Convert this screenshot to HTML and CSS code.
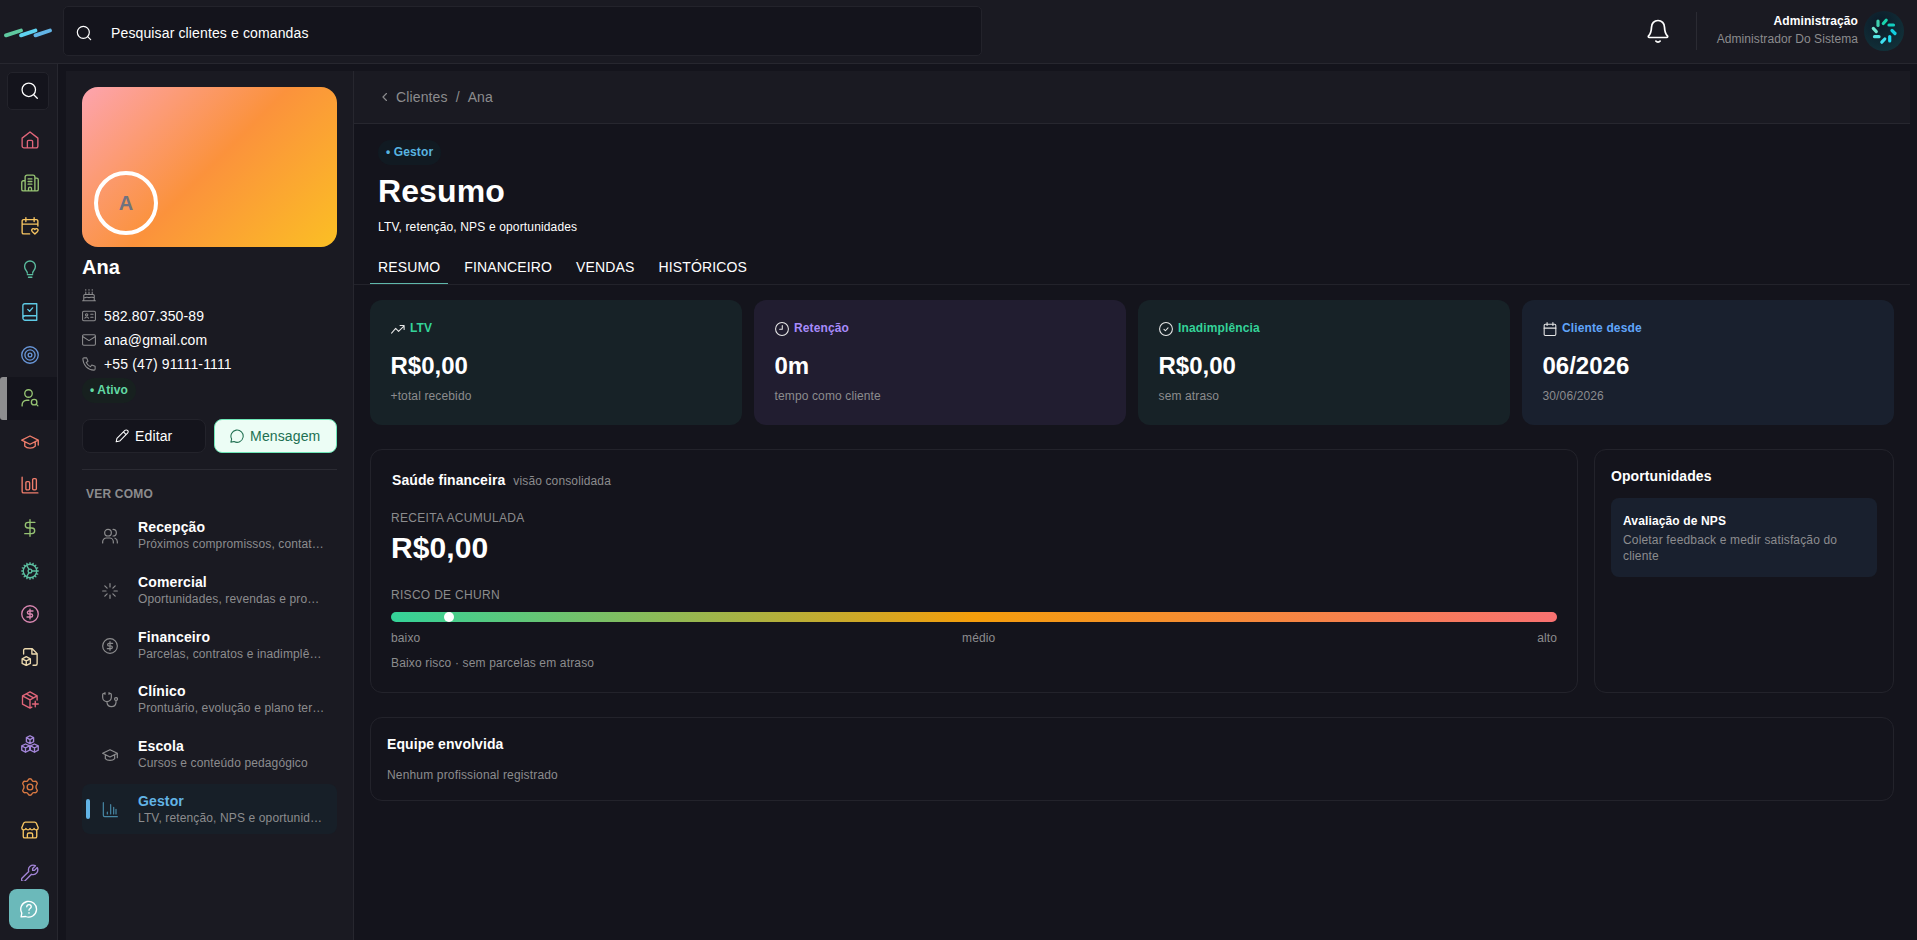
FILE: index.html
```html
<!DOCTYPE html>
<html lang="pt-BR">
<head>
    <meta charset="UTF-8">
    <meta name="viewport" content="width=device-width, initial-scale=1.0">
    <title>Clientes - Ana</title>
    <link rel="stylesheet" href="styles.css">
</head>
<body>

<!-- Topo -->
<header class="topbar">
    <svg class="logo" viewBox="0 0 48 10">
        <path d="M2 7.400L17 2.500" stroke="#5fc9a0"/>
        <path d="M17 7.400L31.500 2.500" stroke="#5fd3f0"/>
        <path d="M31.500 7.400L46 2.500" stroke="#62b4e6"/>
    </svg>
    <div class="search">
        <svg class="icon" viewBox="0 0 24 24"><circle cx="11" cy="11" r="9"/><path d="M22 22l-4.500-4.500"/></svg>
        <span>Pesquisar clientes e comandas</span>
    </div>
    <div class="user-area">
        <svg class="icon bell" viewBox="0 0 24 24"><path d="M3.300 16.500c1.700-1.800 2.500-3.300 2.700-8C6 5 8.600 2.300 12 2.300S18 5 18 8.500c.2 4.700 1 6.200 2.700 8 .5.6.2 1.500-.7 1.500H4c-.9 0-1.200-.9-.7-1.500zM10 21.300c1 1.300 3 1.300 4 0"/></svg>
        <div class="user-name">
            <strong>Administração</strong>
            <span>Administrador Do Sistema</span>
        </div>
        <svg class="user-avatar" viewBox="0 0 40 40">
            <defs>
                <radialGradient id="avatar-bg" cx="0.4" cy="0.3" r="0.8">
                    <stop offset="0" stop-color="#0c1a28"/>
                    <stop offset="1" stop-color="#12333b"/>
                </radialGradient>
            </defs>
            <circle cx="20" cy="20" r="20" fill="url(#avatar-bg)"/>
            <g stroke-width="3.200" stroke-linecap="round">
                <path d="M14 10v4.500" stroke="#3ecfae"/>
                <path d="M19.300 12.500l2.900-3.300" stroke="#19d3ae"/>
                <path d="M25 14h4.500" stroke="#12cdbf"/>
                <path d="M28 19.500l3 3" stroke="#12cfe0"/>
                <path d="M25.700 25.500v4.500" stroke="#1fdcf2"/>
                <path d="M20.800 28l-3 3.200" stroke="#3fe0f0"/>
                <path d="M15 25.700h-4.500" stroke="#52e3e3"/>
                <path d="M12.300 20.600L9.300 17.400" stroke="#6fe6cf"/>
            </g>
        </svg>
    </div>
</header>

<div class="layout">

    <!-- Menu lateral -->
    <nav class="sidebar">
        <div class="side-search">
            <svg class="icon" viewBox="0 0 24 24"><circle cx="11" cy="11" r="9.500"/><path d="M23 23l-5-5"/></svg>
        </div>
        <div class="side-menu">
            <a class="side-item red"><svg class="icon" viewBox="0 0 24 24"><path d="M1.500 9.500L12 1.300l10.500 8.200V20a2.500 2.500 0 0 1-2.500 2.500H4A2.500 2.500 0 0 1 1.500 20zM8.500 22.500V14a1.500 1.500 0 0 1 1.500-1.500h4a1.500 1.500 0 0 1 1.500 1.500v8.500"/></svg></a>
            <a class="side-item green"><svg class="icon" viewBox="0 0 24 24"><path d="M5.500 22.500V4A2.500 2.500 0 0 1 8 1.500h8A2.500 2.500 0 0 1 18.500 4v18.500zM5.500 9H3a2 2 0 0 0-2 2v9.500a2 2 0 0 0 2 2h2.500M18.500 5.500H21a2 2 0 0 1 2 2v13a2 2 0 0 1-2 2h-2.500M9.500 6.500h5M9.500 10h5M9.500 13.500h5M10 22.500v-3a2 2 0 0 1 4 0v3"/></svg></a>
            <a class="side-item yellow"><svg class="icon" viewBox="0 0 24 24"><path d="M22.500 12V5.500a2 2 0 0 0-2-2h-17a2 2 0 0 0-2 2v15a2 2 0 0 0 2 2h8M6.500 1v5M17.500 1v5M1.500 9.500h21M18.500 22.800l-3.600-3.600c-1.300-1.400-.3-3.700 1.500-3.700 1 0 1.600.6 2.100 1.200.5-.6 1.100-1.200 2.100-1.200 1.900 0 2.800 2.300 1.500 3.700z"/></svg></a>
            <a class="side-item teal"><svg class="icon" viewBox="0 0 24 24"><path d="M8.500 17.500c0-3-3.700-4.200-3.700-9A7.200 7.200 0 0 1 12 1.300a7.200 7.200 0 0 1 7.200 7.200c0 4.800-3.700 6-3.700 9M8.500 19.500h7M10 23h4.500"/></svg></a>
            <a class="side-item cyan"><svg class="icon" viewBox="0 0 24 24"><path d="M2.500 20V3.500a2.500 2.500 0 0 1 2.500-2.500h16v22H5.500a3 3 0 0 1 0-6H21M9 8.500l2.500 2.500 4-4.500"/></svg></a>
            <a class="side-item blue"><svg class="icon" viewBox="0 0 24 24"><circle cx="12" cy="12" r="11"/><circle cx="12" cy="12" r="6.800"/><circle cx="12" cy="12" r="2.500"/></svg></a>
            <a class="side-item green active"><svg class="icon" viewBox="0 0 24 24"><circle cx="10" cy="6" r="5"/><path d="M1.500 22.500v-1.500a6 6 0 0 1 6-6h3M22.500 22.500l-2-2"/><circle cx="17.500" cy="17.500" r="3.700"/></svg></a>
            <a class="side-item coral"><svg class="icon" viewBox="0 0 24 24"><path d="M1 9.500L12 4l11 5.500-11 5.500zM23 9.500v6.500M5 12v5.500c3 3.500 11 3.500 14 0V12"/></svg></a>
            <a class="side-item coral"><svg class="icon" viewBox="0 0 24 24"><path d="M1.500 1.500v19a2 2 0 0 0 2 2h19"/><rect x="6.500" y="7.500" width="5" height="11" rx="1.500"/><rect x="15.500" y="3.500" width="5" height="15" rx="1.500"/></svg></a>
            <a class="side-item green"><svg class="icon" viewBox="0 0 24 24"><path d="M12 1v22M18.500 4.500H9.500a3.700 3.700 0 0 0 0 7.500h5a3.700 3.700 0 0 1 0 7.500H5"/></svg></a>
            <a class="side-item teal"><svg class="icon" viewBox="0 0 24 24"><circle cx="12" cy="12" r="9"/><circle cx="12" cy="12" r="2.500"/><path d="M12 1v2M12 21v2M1 12h2M14.500 12H21M23 12h-2M4.200 4.200l1.500 1.500M18.300 18.300l1.500 1.500M4.200 19.800l1.500-1.500M18.300 5.700l1.500-1.500M10.700 9.800L7.500 4.500M10.700 14.200L7.500 19.500M7.800 1.800l.7 1.700M15.500 20.500l.7 1.700M16.200 1.800l-.7 1.700M8.500 20.500l-.7 1.700M1.800 7.800l1.700.7M20.500 15.500l1.700.7M1.800 16.200l1.700-.7M20.500 8.500l1.700-.7"/></svg></a>
            <a class="side-item pink"><svg class="icon" viewBox="0 0 24 24"><circle cx="12" cy="12" r="11"/><path d="M16 8h-5.500a2 2 0 0 0 0 4h3a2 2 0 0 1 0 4H8M12 5.500v13"/></svg></a>
            <a class="side-item sand"><svg class="icon" viewBox="0 0 24 24"><path d="M3.500 8V3A2 2 0 0 1 5.500 1H15l6.500 6.500V21a2 2 0 0 1-2 2H16M14.500 1v7h7M7 11.500l5.500 3v6L7 23.300l-5.500-2.800v-6zM1.500 14.500L7 17.300l5.500-2.800M7 17.300v6"/></svg></a>
            <a class="side-item red"><svg class="icon" viewBox="0 0 24 24"><path d="M21.500 12V6.500L12 1.200 2 6.500v11l10 5.300 2.500-1.300M2 6.500l10 5.300 9.500-5.300M12 11.800v11M7 3.800l9.800 5.300M19 13.500v7.500M15.300 17.300h7.700"/></svg></a>
            <a class="side-item purple"><svg class="icon" viewBox="0 0 24 24"><path d="M12 1l4.800 2.600v5.400L12 11.600 7.200 9V3.600zM7.200 3.600L12 6.200l4.800-2.600M12 6.200v5.400M6 12l5.500 2.600v5.600L6 23l-5-2.800v-5.600zM1 14.600l5 2.700 5-2.700M6 17.300V23M18 12l5 2.600v5.600L18 23l-5.500-2.800v-5.600zM13 14.600l5 2.700 5-2.700M18 17.300V23"/></svg></a>
            <a class="side-item orange"><svg class="icon" viewBox="0 0 24 24"><path d="M9.500 2.600c.7-2.200 4.300-2.200 5 0 .5 1.500 1.900 2.200 3.500 1.800 2.700-.7 4.900 2.700 2.900 4.800-1.200 1.300-1.200 4.300 0 5.600 2 2.100-.2 5.500-2.900 4.800-1.600-.4-3 .3-3.500 1.800-.7 2.200-4.300 2.200-5 0-.5-1.500-1.900-2.200-3.500-1.800-2.700.7-4.900-2.700-2.900-4.800 1.200-1.300 1.200-4.300 0-5.600-2-2.100.2-5.500 2.900-4.800 1.600.4 3-.3 3.500-1.800z"/><circle cx="12" cy="12" r="3.800"/></svg></a>
            <a class="side-item yellow"><svg class="icon" viewBox="0 0 24 24"><path d="M1 9l2.500-6a2.500 2.500 0 0 1 2.300-1.500h12.400A2.500 2.500 0 0 1 20.500 3L23 9c0 3.500-4.500 3.500-5.500 1-1.500 2.500-4.300 2.500-5.500 0-1.200 2.500-4 2.500-5.500 0C5.500 12.500 1 12.500 1 9zM3 12v8.500a2 2 0 0 0 2 2h14a2 2 0 0 0 2-2V12M8.500 22.500V18a2 2 0 0 1 2-2h3a2 2 0 0 1 2 2v4.500"/></svg></a>
            <a class="side-item purple"><svg class="icon" viewBox="0 0 24 24"><path d="M15.500 6l3.700-3.700C14 0 8.500 4 10.300 10L1.500 18.800a2.500 2.500 0 0 0 3.700 3.700L14 13.700c6 1.800 10-3.700 7.700-8.900L18 8.500h-2.500z"/></svg></a>
        </div>
        <a class="help"><svg class="icon" viewBox="0 0 24 24"><path d="M1.500 22.500l.9-5A10.500 10.500 0 1 1 7.500 22zM9 9c.3-4 6-3.700 6 0 0 2.300-3 2.300-3 4.500M12 17v.5"/></svg></a>
    </nav>

    <div class="page">

        <!-- Painel do cliente -->
        <aside class="profile">
            <div class="cover"><div class="avatar">A</div></div>
            <h2>Ana</h2>
            <ul class="contacts">
                <li class="birthday"><svg class="icon" viewBox="0 0 24 24"><path d="M3 21v-8a2 2 0 0 1 2-2h14a2 2 0 0 1 2 2v8M1 22h22M3 16c3 2 3-1 6 0s3 1 6 0 3 1 6 0M6.500 7v4M12 7v4M17.500 7v4M6.500 2.500V4M12 2.500V4M17.500 2.500V4"/></svg></li>
                <li><svg class="icon" viewBox="0 0 24 24"><rect x="1" y="4" width="22" height="16" rx="2"/><circle cx="8" cy="10" r="2"/><path d="M5 16c0-3 6-3 6 0M15 9h4M15 14h4"/></svg><span>582.807.350-89</span></li>
                <li><svg class="icon" viewBox="0 0 24 24"><rect x="1" y="3" width="22" height="18" rx="2"/><path d="M1 6l11 7 11-7"/></svg><span>ana@gmail.com</span></li>
                <li><svg class="icon" viewBox="0 0 24 24"><path d="M3.500 1.500H8l2.300 5.800-3 2.200a15 15 0 0 0 7.200 7.200l2.200-3 5.800 2.300v4.500a2 2 0 0 1-2 2C10 22 2 14 1.500 3.500a2 2 0 0 1 2-2z"/></svg><span>+55 (47) 91111-1111</span></li>
            </ul>
            <span class="badge badge-active">• Ativo</span>
            <div class="actions">
                <button class="btn"><svg class="icon" viewBox="0 0 24 24"><path d="M2 22l1.300-6L17 2.500a3 3 0 0 1 4.500 4.500L8 20.700zM14.500 5l4.500 4.500"/></svg>Editar</button>
                <button class="btn btn-message"><svg class="icon" viewBox="0 0 24 24"><path d="M1.500 22.500l1.300-5.300A10.500 10.500 0 1 1 7 21.500z"/></svg>Mensagem</button>
            </div>
            <div class="views-title">VER COMO</div>
            <ul class="views">
                <li>
                    <svg class="icon" viewBox="0 0 24 24"><circle cx="9" cy="7" r="5"/><path d="M1 22.500v-2a5.500 5.500 0 0 1 5.500-5.500h5a5.500 5.500 0 0 1 5.500 5.500v2M16.500 2a5 5 0 0 1 0 10M23 22.500v-2a5.500 5.500 0 0 0-3.500-5.200"/></svg>
                    <div><strong>Recepção</strong><span>Próximos compromissos, contat…</span></div>
                </li>
                <li>
                    <svg class="icon" viewBox="0 0 24 24"><path d="M12 1v5M12 18v5M1 12h5M18 12h5M4.200 4.200l3.500 3.500M16.300 16.300l3.500 3.500M4.200 19.800l3.500-3.500M16.300 7.700l3.500-3.500"/></svg>
                    <div><strong>Comercial</strong><span>Oportunidades, revendas e pro…</span></div>
                </li>
                <li>
                    <svg class="icon" viewBox="0 0 24 24"><circle cx="12" cy="12" r="11"/><path d="M16 8h-5.500a2 2 0 0 0 0 4h3a2 2 0 0 1 0 4H8M12 5.500v13"/></svg>
                    <div><strong>Financeiro</strong><span>Parcelas, contratos e inadimplê…</span></div>
                </li>
                <li>
                    <svg class="icon" viewBox="0 0 24 24"><path d="M4.500 2H3a2 2 0 0 0-2 2v4a6.500 6.500 0 0 0 13 0V4a2 2 0 0 0-2-2h-1.500M4.500 1v2.500M10.500 1v2.500M7.500 14.500V16a6.800 6.800 0 0 0 13.500 0v-3"/><circle cx="21" cy="10.500" r="2.200"/></svg>
                    <div><strong>Clínico</strong><span>Prontuário, evolução e plano ter…</span></div>
                </li>
                <li>
                    <svg class="icon" viewBox="0 0 24 24"><path d="M1 9.500L12 4l11 5.500-11 5.500zM23 9.500v6.500M5 12v5.500c3 3.500 11 3.500 14 0V12"/></svg>
                    <div><strong>Escola</strong><span>Cursos e conteúdo pedagógico</span></div>
                </li>
                <li class="selected">
                    <svg class="icon" viewBox="0 0 24 24"><path d="M2 1v19a2 2 0 0 0 2 2h19M8 18v-3M13 18V4M17.500 18V8M21 18v-7"/></svg>
                    <div><strong>Gestor</strong><span>LTV, retenção, NPS e oportunid…</span></div>
                </li>
            </ul>
        </aside>

        <!-- Conteúdo -->
        <main class="content">
            <div class="breadcrumb">
                <svg class="icon" viewBox="0 0 24 24"><path d="M14.500 6l-6 6 6 6"/></svg>
                <span>Clientes</span><span>/</span><span>Ana</span>
            </div>
            <div class="heading">
                <span class="badge badge-view">• Gestor</span>
                <h1>Resumo</h1>
                <p>LTV, retenção, NPS e oportunidades</p>
            </div>
            <div class="tabs">
                <a class="tab current">RESUMO</a>
                <a class="tab">FINANCEIRO</a>
                <a class="tab">VENDAS</a>
                <a class="tab">HISTÓRICOS</a>
            </div>
            <div class="panels">
                <section class="kpis">
                    <div class="kpi kpi-green">
                        <h4><svg class="icon" viewBox="0 0 24 24"><path d="M1 19l7-8 5 5 9.500-9.500M15.500 6h7v7"/></svg>LTV</h4>
                        <strong>R$0,00</strong>
                        <span>+total recebido</span>
                    </div>
                    <div class="kpi kpi-purple">
                        <h4><svg class="icon" viewBox="0 0 24 24"><circle cx="12" cy="12" r="11"/><path d="M12.500 6v6.500H8"/></svg>Retenção</h4>
                        <strong>0m</strong>
                        <span>tempo como cliente</span>
                    </div>
                    <div class="kpi kpi-green">
                        <h4><svg class="icon" viewBox="0 0 24 24"><circle cx="12" cy="12" r="11"/><path d="M8.500 12.500l2.500 2.500 4.500-5"/></svg>Inadimplência</h4>
                        <strong>R$0,00</strong>
                        <span>sem atraso</span>
                    </div>
                    <div class="kpi kpi-blue">
                        <h4><svg class="icon" viewBox="0 0 24 24"><rect x="2" y="4" width="20" height="19" rx="2"/><path d="M7 1v5M17 1v5M2 10.500h20"/></svg>Cliente desde</h4>
                        <strong>06/2026</strong>
                        <span>30/06/2026</span>
                    </div>
                </section>

                <section class="row">
                    <div class="card finance">
                        <div class="finance-title"><h3>Saúde financeira</h3><span>visão consolidada</span></div>
                        <div class="label">RECEITA ACUMULADA</div>
                        <div class="total">R$0,00</div>
                        <div class="label">RISCO DE CHURN</div>
                        <div class="risk"><div class="risk-dot" style="left: 5%"></div></div>
                        <div class="risk-scale"><span>baixo</span><span>médio</span><span>alto</span></div>
                        <div class="risk-note">Baixo risco · sem parcelas em atraso</div>
                    </div>
                    <div class="card opportunities">
                        <h3>Oportunidades</h3>
                        <div class="tip">
                            <strong>Avaliação de NPS</strong>
                            <span>Coletar feedback e medir satisfação do cliente</span>
                        </div>
                    </div>
                </section>

                <section class="card team">
                    <h3>Equipe envolvida</h3>
                    <p>Nenhum profissional registrado</p>
                </section>
            </div>
        </main>
    </div>
</div>
</body>
</html>
```
FILE: styles.css
```css
* {
    box-sizing: border-box;
}
body {
    margin: 0;
    height: 100vh;
    overflow: hidden;
    display: flex;
    flex-direction: column;
    background-color: #14141c;
    color: #fff;
    font-family: "Liberation Sans", Arial, sans-serif;
    font-size: 14px;
    line-height: 20px;
    letter-spacing: 0.13px;
}
h1, h2, h3, h4, p, ul {
    margin: 0;
    padding: 0;
}
ul {
    list-style: none;
}
.icon {
    flex: none;
    width: 18px;
    height: 18px;
    fill: none;
    stroke: currentColor;
    stroke-width: 1.8;
    stroke-linecap: round;
    stroke-linejoin: round;
}

/* Topo */
.topbar {
    flex: none;
    height: 64px;
    display: flex;
    align-items: center;
    padding: 0 13px 2px 4px;
    background-color: #1a1a22;
    border-bottom: 1px solid #27272f;
}
.logo {
    width: 48px;
    height: 10px;
    margin: 4px 11px 0 0;
    fill: none;
    stroke-width: 3.8;
    stroke-linecap: round;
}
.search {
    width: 919px;
    height: 50px;
    display: flex;
    align-items: center;
    gap: 19px;
    padding: 4px 0 0 12px;
    background-color: #14141c;
    border: 1px solid #23232b;
    border-radius: 5px;
}
.search .icon {
    width: 16px;
    height: 16px;
}
.user-area {
    margin-left: auto;
    display: flex;
    align-items: center;
}
.bell {
    width: 26px;
    height: 26px;
    margin-right: 25px;
    stroke-width: 1.6;
}
.user-name {
    height: 38px;
    width: 162px;
    margin-right: 6px;
    border-left: 1px solid #2b2b33;
    text-align: right;
    font-size: 12px;
    line-height: 18px;
    letter-spacing: 0.08px;
}
.user-name strong, .user-name span {
    display: block;
}
.user-name span {
    color: #8c8c8e;
}
.user-avatar {
    width: 40px;
    height: 40px;
}

/* Menu lateral */
.layout {
    flex: 1;
    min-height: 0;
    display: flex;
}
.sidebar {
    flex: none;
    width: 58px;
    display: flex;
    flex-direction: column;
    background-color: #1a1a22;
    border-right: 1px solid #27272f;
}
.side-search {
    flex: none;
    width: 42px;
    height: 38px;
    margin: 8px 0 8px 7px;
    padding: 9px 0 0 13px;
    background-color: #14141c;
    border: 1px solid #23232b;
    border-radius: 5px;
}
.side-search .icon {
    display: block;
    width: 17px;
    height: 17px;
}
.side-menu {
    height: 763px;
    overflow: hidden;
}
.side-item {
    height: 43.15px;
    display: flex;
    align-items: center;
    padding-left: 21px;
}
.side-item.active {
    padding-left: 14px;
    background-color: #14141c;
    border-left: 7px solid #8e8e90;
    border-radius: 3px 0 0 3px;
}
.red { color: #e2667a; }
.green { color: #96c373; }
.yellow { color: #f8c662; }
.teal { color: #5bbd9f; }
.cyan { color: #5fcbe6; }
.blue { color: #6896d8; }
.coral { color: #f07d6c; }
.pink { color: #d886b0; }
.sand { color: #ecd9ae; }
.purple { color: #a385d8; }
.orange { color: #dc7a43; }
.help {
    width: 40px;
    height: 40px;
    margin: 8px 0 0 9px;
    padding: 11px;
    background-color: #6bb9ba;
    border-radius: 8px;
}
.help .icon {
    display: block;
}

/* Painel do cliente */
.page {
    flex: 1;
    display: flex;
    padding: 7px 7px 0 8px;
}
.profile {
    flex: none;
    width: 288px;
    padding: 16px 16px 0;
    background-color: #1a1a22;
    border-right: 1px solid #27272f;
}
.cover {
    height: 160px;
    display: flex;
    align-items: flex-end;
    padding: 12px;
    border-radius: 16px;
    background: linear-gradient(135deg, #fda4af, #fb923c 50%, #fbbf24);
}
.avatar {
    width: 64px;
    height: 64px;
    border: 4px solid #fff;
    border-radius: 50%;
    color: #70727f;
    font-size: 20px;
    font-weight: bold;
    line-height: 56px;
    text-align: center;
}
.profile h2 {
    margin-top: 8px;
    font-size: 20px;
    line-height: 24px;
    letter-spacing: 0;
}
.contacts li {
    height: 24px;
    display: flex;
    align-items: center;
    gap: 8px;
    letter-spacing: 0.15px;
}
.contacts .birthday {
    height: 18px;
    margin-top: 7px;
}
.contacts .icon {
    width: 14px;
    height: 14px;
    color: #8c8c8e;
}
.badge {
    display: block;
    height: 25px;
    padding-left: 8px;
    border-radius: 13px;
    font-size: 12px;
    font-weight: bold;
    line-height: 25px;
    white-space: nowrap;
}
.badge-active {
    width: 54px;
    margin-top: 2px;
    color: #62d9a4;
    background-color: #17201f;
}
.badge-view {
    width: 63px;
    color: #58b4e0;
    background-color: #111a22;
}
.actions {
    display: flex;
    gap: 8px;
    margin-top: 16px;
    padding-bottom: 16px;
    border-bottom: 1px solid #2b2b33;
}
.btn {
    flex: 1;
    height: 34px;
    padding: 0;
    display: flex;
    align-items: center;
    justify-content: center;
    gap: 6px;
    background-color: #14141c;
    border: 1px solid #23232b;
    border-radius: 8px;
    color: #fff;
    font: inherit;
    letter-spacing: 0.13px;
}
.btn .icon {
    width: 14px;
    height: 14px;
}
.btn-message {
    background-color: #ecfdf5;
    border-color: #6ee7b7;
    color: #217052;
}
.views-title {
    margin: 14px 0 6px 4px;
    color: #8c8c8e;
    font-size: 12px;
    font-weight: bold;
    letter-spacing: 0.2px;
}
.views li {
    height: 50px;
    display: flex;
    align-items: center;
    gap: 20px;
    margin-bottom: 4.8px;
    padding-left: 20px;
    border-radius: 8px;
}
.views .icon {
    width: 16px;
    height: 16px;
    margin-top: 2px;
    color: #8c8c8e;
}
.views strong, .views span {
    display: block;
    white-space: nowrap;
}
.views strong {
    line-height: 18px;
}
.views span {
    color: #8c8c8e;
    font-size: 12px;
    line-height: 16px;
}
.views .selected {
    background-color: #171f28;
}
.views .selected::before {
    content: "";
    width: 4px;
    height: 20px;
    margin: 0 -8px 0 -16px;
    border-radius: 2px;
    background-color: #62b4e6;
}
.views .selected strong {
    color: #62b4e6;
}
.views .selected .icon {
    color: #4787a5;
}

/* Conteúdo */
.content {
    flex: 1;
}
.breadcrumb {
    height: 53px;
    display: flex;
    align-items: center;
    gap: 8px;
    padding: 0 0 0 24px;
    background-color: #1a1a22;
    border-bottom: 1px solid #27272f;
    color: #8c8c8e;
}
.breadcrumb .icon {
    width: 14px;
    height: 14px;
    margin-right: -4px;
    stroke-width: 2;
}
.heading {
    padding: 16px 24px 0;
}
.heading h1 {
    margin-top: 6px;
    font-size: 32px;
    line-height: 40px;
    letter-spacing: 0.1px;
}
.heading p {
    margin-top: 8px;
    font-size: 12px;
    line-height: 16px;
    letter-spacing: 0.15px;
}
.tabs {
    display: flex;
    height: 50px;
    padding: 18px 0 0 16px;
    border-bottom: 1px solid #23232b;
}
.tab {
    height: 32px;
    padding: 4px 8px 0;
    margin-right: 8px;
    letter-spacing: 0.14px;
}
.tab.current {
    height: 31px;
    border-bottom: 1px solid #5fb8ab;
}
.panels {
    padding: 15px 16px 0;
}
.kpis {
    display: grid;
    grid-template-columns: repeat(4, 1fr);
    gap: 12px;
}
.kpi {
    height: 125px;
    padding: 20px 20.5px;
    border-radius: 12px;
}
.kpi h4 {
    display: flex;
    gap: 5.5px;
    font-size: 12px;
    line-height: 16px;
}
.kpi h4 .icon {
    width: 14px;
    height: 14px;
    margin-top: 2px;
    color: #e8e8e8;
}
.kpi strong, .kpi span {
    display: block;
}
.kpi strong {
    margin-top: 14px;
    font-size: 24px;
    line-height: 32px;
    letter-spacing: 0;
}
.kpi span {
    margin-top: 6px;
    color: #8c8c8e;
    font-size: 12px;
    line-height: 16px;
}
.kpi-green { background-color: #172227; }
.kpi-green h4 { color: #34d399; }
.kpi-purple { background-color: #211d30; }
.kpi-purple h4 { color: #a78bfa; }
.kpi-blue { background-color: #19202e; }
.kpi-blue h4 { color: #60a5fa; }

.row {
    display: grid;
    grid-template-columns: 1fr 300px;
    gap: 16px;
    margin-top: 24px;
}
.card {
    border: 1px solid #23232b;
    border-radius: 12px;
}
.card h3 {
    font-size: 14px;
    line-height: 20px;
    letter-spacing: 0.08px;
}
.finance {
    height: 244px;
    padding: 20px;
    color: #8c8c8e;
    font-size: 12px;
}
.finance-title {
    display: flex;
    align-items: baseline;
    gap: 8px;
    padding-left: 1px;
}
.finance-title h3 {
    color: #fff;
}
.label {
    margin-top: 19px;
    line-height: 16px;
    letter-spacing: 0.3px;
}
.total {
    margin-top: 2px;
    color: #fff;
    font-size: 30px;
    font-weight: bold;
    line-height: 40px;
    letter-spacing: 0.1px;
}
.risk {
    position: relative;
    height: 10px;
    margin-top: 9px;
    border-radius: 5px;
    background: linear-gradient(90deg, #34d399, #f59e0b 50%, #f87171);
}
.risk-dot {
    position: absolute;
    top: 0;
    width: 10px;
    height: 10px;
    margin-left: -5px;
    border-radius: 50%;
    background-color: #fff;
}
.risk-scale {
    display: flex;
    justify-content: space-between;
    margin-top: 8px;
    line-height: 16px;
}
.risk-note {
    margin-top: 9px;
    line-height: 16px;
    letter-spacing: 0.16px;
}
.opportunities {
    padding: 16px;
}
.tip {
    height: 79px;
    margin-top: 12px;
    padding: 15px 12px;
    border-radius: 8px;
    background-color: #19202e;
    font-size: 12px;
    line-height: 16px;
}
.tip strong, .tip span {
    display: block;
}
.tip span {
    margin-top: 3px;
    color: #8c8c8e;
    letter-spacing: 0.16px;
}
.team {
    height: 84px;
    margin-top: 24px;
    padding: 16px;
}
.team p {
    margin-top: 13px;
    color: #8c8c8e;
    font-size: 12px;
    line-height: 16px;
    letter-spacing: 0.16px;
}
```
